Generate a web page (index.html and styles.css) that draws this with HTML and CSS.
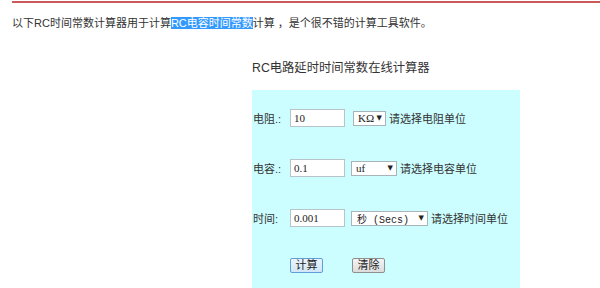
FILE: index.html
```html
<!DOCTYPE html>
<html lang="zh-CN">
<head>
    <meta charset="UTF-8">
    <title>RC电路延时时间常数在线计算器</title>
    <link rel="stylesheet" href="styles.css">
</head>
<body>

    <div class="top-rule"></div>

    <p class="intro">以下RC时间常数计算器用于计算<span class="picked">RC电容时间常数</span>计算 ，是个很不错的计算工具软件。</p>

    <div class="calc">
        <h2 class="calc-title">RC电路延时时间常数在线计算器</h2>

        <div class="panel">
            <div class="row">
                <span class="label">电阻.:</span>
                <span class="field">10</span>
                <span class="sel sel-r"><span>KΩ</span><span class="arrow">▼</span></span>
                <span class="hint">请选择电阻单位</span>
            </div>
            <div class="row">
                <span class="label">电容.:</span>
                <span class="field">0.1</span>
                <span class="sel sel-c"><span>uf</span><span class="arrow">▼</span></span>
                <span class="hint">请选择电容单位</span>
            </div>
            <div class="row">
                <span class="label">时间:</span>
                <span class="field">0.001</span>
                <span class="sel sel-t"><span>秒 (Secs)</span><span class="arrow">▼</span></span>
                <span class="hint">请选择时间单位</span>
            </div>
            <div class="row row-buttons">
                <button class="btn btn-focus">计算</button>
                <button class="btn">清除</button>
            </div>
        </div>
    </div>

</body>
</html>
```

FILE: styles.css
```css
body {
    margin: 0;
    padding: 0 0 0 12px;
    font-family: "Liberation Sans", "Noto Sans CJK SC", sans-serif;
    font-size: 11px;
    color: #333;
    background: #fff;
}

.top-rule {
    margin-top: 1px;
    height: 2px;
    background: #c85a5a;
}

.intro {
    margin: 14px 0 0;
    line-height: 12px;
}

.picked {
    background: #3399ff;
    color: #fff;
}

.calc {
    margin-left: 240px;
    width: 268px;
}

.calc-title {
    margin: 31px 0 0;
    font-size: 12.3px;
    font-weight: normal;
    line-height: 16px;
    color: #333;
}

.panel {
    margin-top: 14px;
    padding-top: 3px;
    background: #ccfeff;
}

.row {
    display: flex;
    align-items: center;
    height: 50px;
    white-space: nowrap;
}

.label {
    width: 38px;
    padding-left: 1px;
    box-sizing: border-box;
}

.field {
    display: flex;
    align-items: center;
    box-sizing: border-box;
    width: 55px;
    height: 18px;
    padding-left: 3px;
    border: 1px solid #b8c4c8;
    background: #fff;
    font-family: "Liberation Serif", "Noto Sans CJK SC", serif;
    font-size: 11px;
    color: #222;
}

.sel {
    display: flex;
    align-items: center;
    justify-content: space-between;
    box-sizing: border-box;
    height: 15px;
    margin-left: 6px;
    padding: 0 3px 0 4px;
    border: 1px solid #a9b4b8;
    background: #fff;
    font-family: "Liberation Serif", "Noto Sans CJK SC", serif;
    font-size: 11px;
    color: #222;
}

.sel-r {
    width: 33px;
    margin-left: 8px;
}

.sel-c {
    width: 46px;
}

.sel-t {
    width: 77px;
    padding-left: 5px;
    font-family: "Liberation Mono", "Noto Sans CJK SC", monospace;
    font-size: 10px;
}

.arrow {
    font-size: 7px;
    font-family: "DejaVu Sans", sans-serif;
}

.hint {
    margin-left: 3px;
}

.row-buttons {
    height: 45px;
    padding-left: 38px;
    gap: 29px;
}

.btn {
    box-sizing: border-box;
    width: 33px;
    height: 15px;
    padding: 0;
    border: 1px solid #8e8f8f;
    border-radius: 2px;
    background: linear-gradient(#f4f4f4, #dcdcdc);
    font-family: "Liberation Sans", "Noto Sans CJK SC", sans-serif;
    font-size: 11px;
    line-height: 13px;
    color: #222;
}

.btn-focus {
    border-color: #5e9fd8;
    background: linear-gradient(#eaf4fc, #d2e6f6);
}
```
